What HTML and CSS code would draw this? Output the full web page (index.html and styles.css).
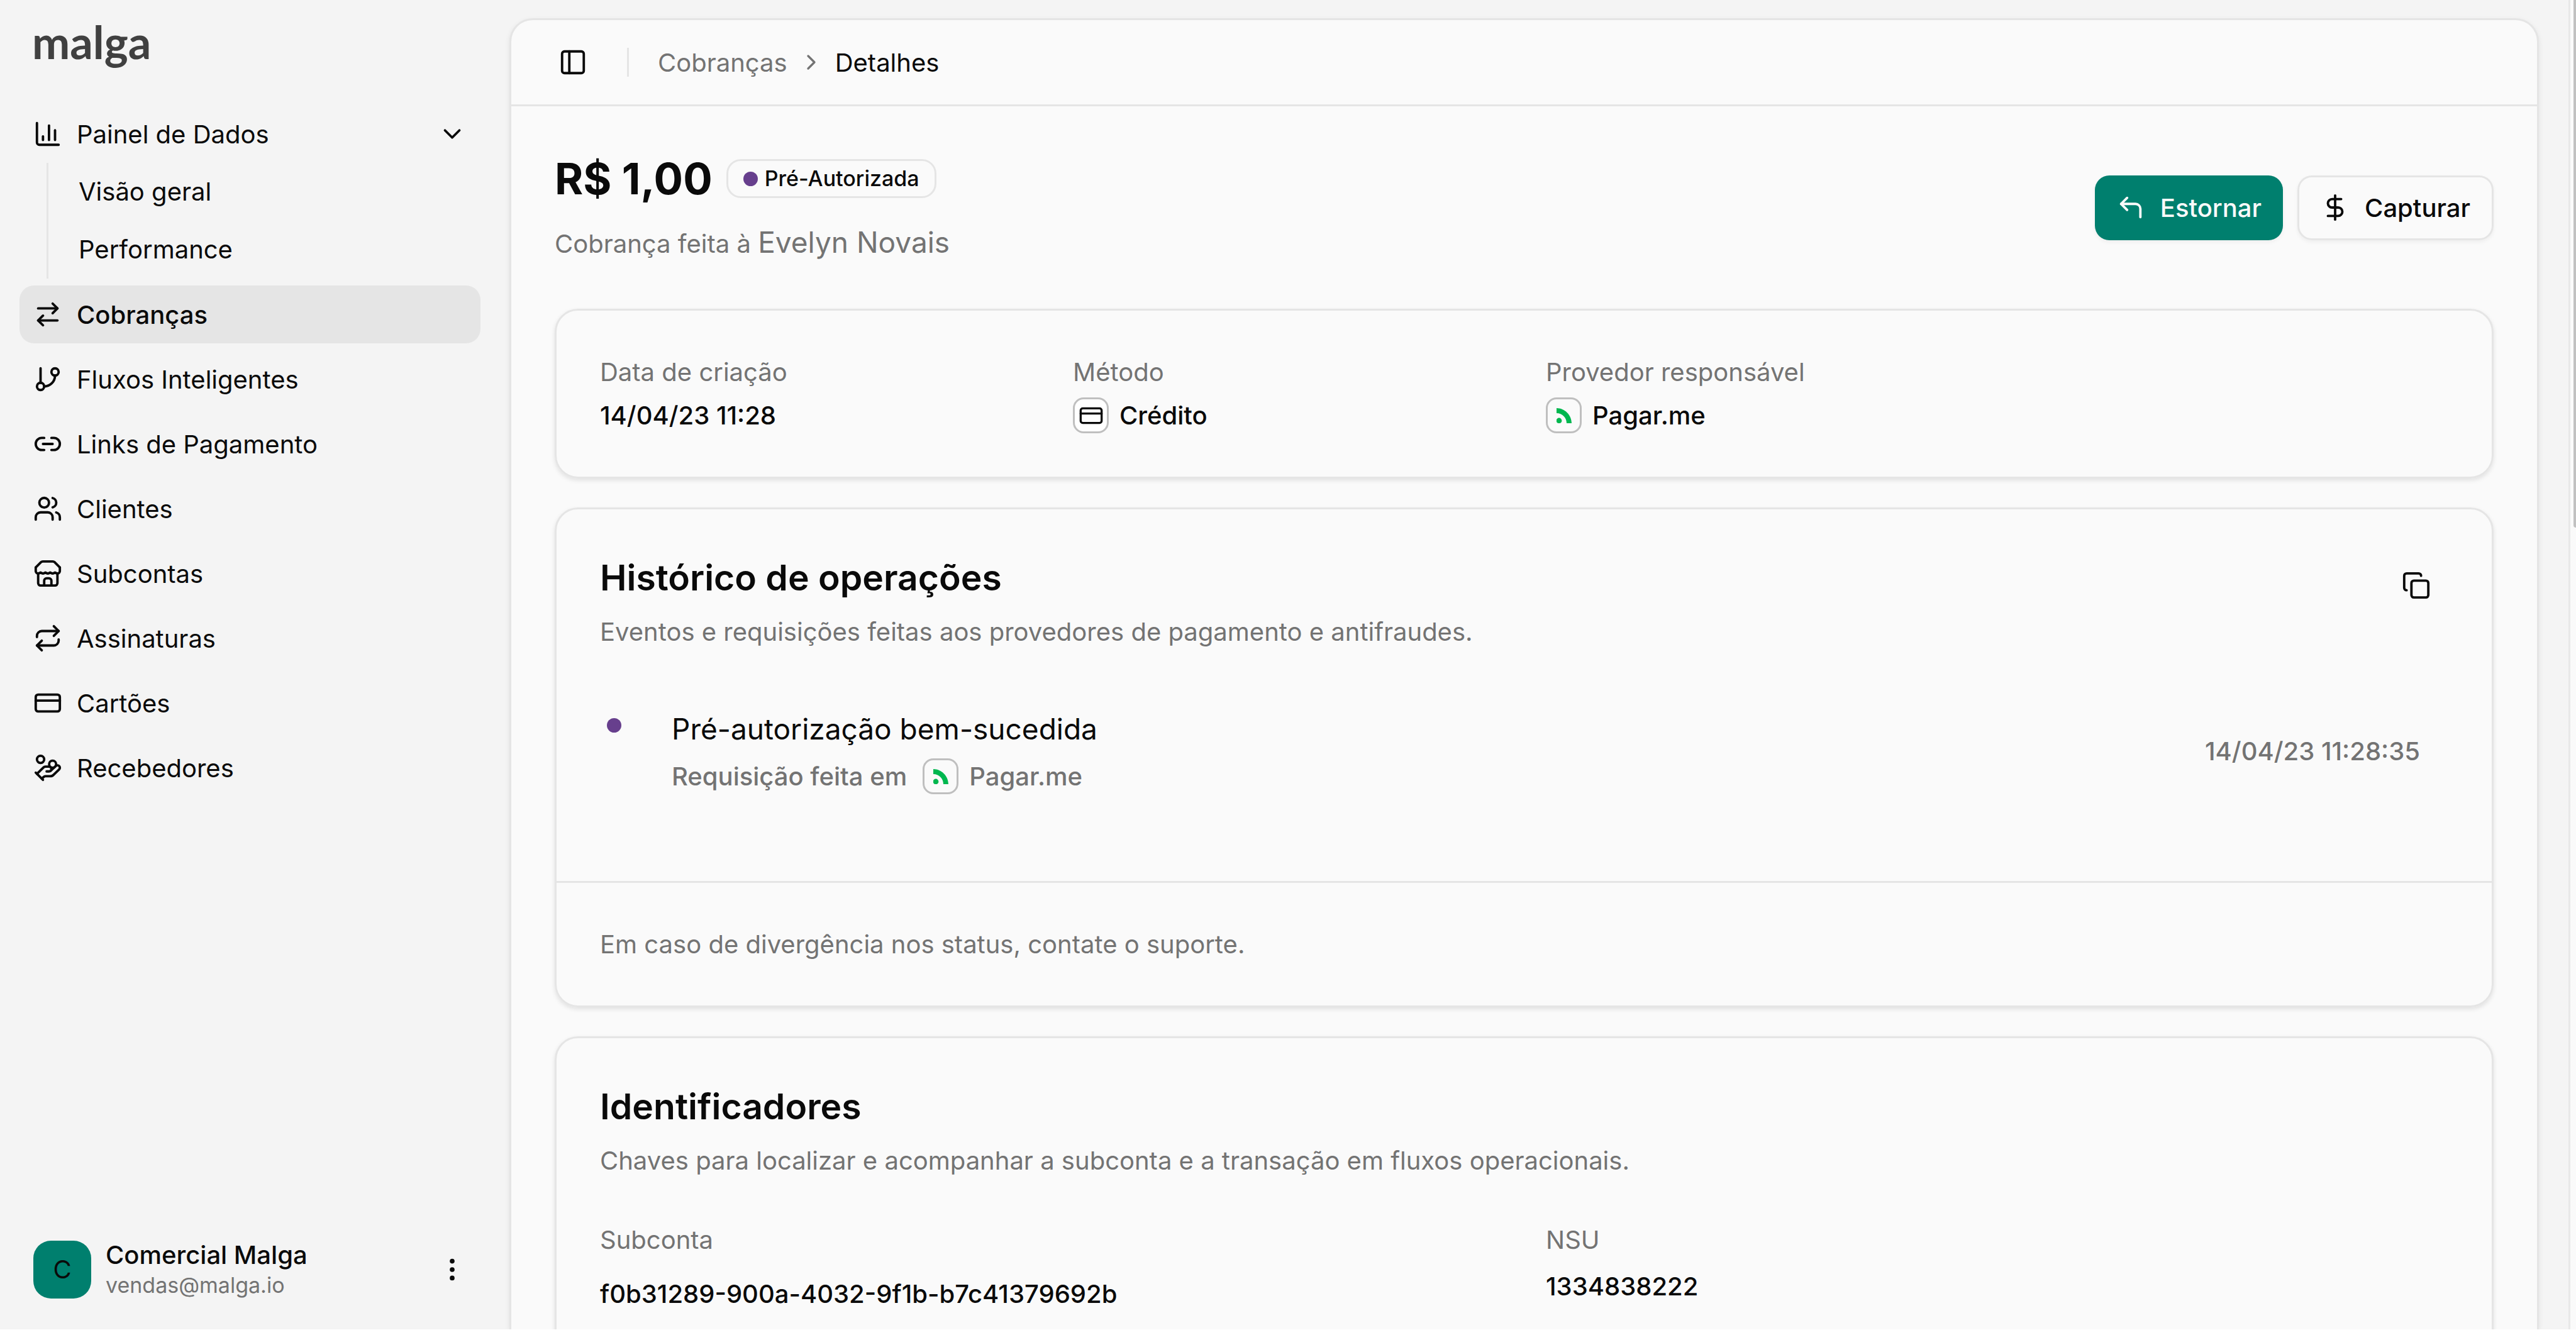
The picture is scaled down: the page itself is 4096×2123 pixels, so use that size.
FILE: index.html
```
<!DOCTYPE html>
<html lang="pt-BR">
<head>
    <meta charset="UTF-8">
    <title>Malga - Detalhes da cobrança</title>
    <link rel="stylesheet" href="styles.css">
</head>
<body>
    <div class="app">
        <aside class="sidebar">
            <a href="#" class="logo">malga</a>
            <nav class="nav">
                <button type="button" class="nav-item">
                    <svg class="icon" viewBox="0 0 24 24"><path d="M3 3v16a2 2 0 0 0 2 2h16"/><path d="M13 17V5"/><path d="M18 17V9"/><path d="M8 17v-3"/></svg>
                    <span>Painel de Dados</span>
                    <svg class="icon chevron" viewBox="0 0 24 24"><path d="m6 9 6 6 6-6"/></svg>
                </button>
                <div class="submenu">
                    <a href="#">Visão geral</a>
                    <a href="#">Performance</a>
                </div>
                <a href="#" class="nav-item active">
                    <svg class="icon" viewBox="0 0 24 24"><path d="m16 3 4 4-4 4"/><path d="M20 7H4"/><path d="m8 21-4-4 4-4"/><path d="M4 17h16"/></svg>
                    <span>Cobranças</span>
                </a>
                <a href="#" class="nav-item">
                    <svg class="icon" viewBox="0 0 24 24"><path d="M6 3v12"/><circle cx="18" cy="6" r="3"/><circle cx="6" cy="18" r="3"/><path d="M18 9a9 9 0 0 1-9 9"/></svg>
                    <span>Fluxos Inteligentes</span>
                </a>
                <a href="#" class="nav-item">
                    <svg class="icon" viewBox="0 0 24 24"><path d="M9 17H7A5 5 0 0 1 7 7h2"/><path d="M15 7h2a5 5 0 1 1 0 10h-2"/><path d="M8 12h8"/></svg>
                    <span>Links de Pagamento</span>
                </a>
                <a href="#" class="nav-item">
                    <svg class="icon" viewBox="0 0 24 24"><path d="M16 21v-2a4 4 0 0 0-4-4H6a4 4 0 0 0-4 4v2"/><circle cx="9" cy="7" r="4"/><path d="M22 21v-2a4 4 0 0 0-3-3.87"/><path d="M16 3.13a4 4 0 0 1 0 7.75"/></svg>
                    <span>Clientes</span>
                </a>
                <a href="#" class="nav-item">
                    <svg class="icon" viewBox="0 0 24 24"><path d="m2 7 4.41-4.41A2 2 0 0 1 7.83 2h8.34a2 2 0 0 1 1.42.59L22 7"/><path d="M4 12v8a2 2 0 0 0 2 2h12a2 2 0 0 0 2-2v-8"/><path d="M15 22v-4a2 2 0 0 0-2-2h-2a2 2 0 0 0-2 2v4"/><path d="M2 7v3a2 2 0 0 0 2 2 2.7 2.7 0 0 0 1.59-.63.7.7 0 0 1 .82 0A2.7 2.7 0 0 0 8 12a2.7 2.7 0 0 0 1.59-.63.7.7 0 0 1 .82 0A2.7 2.7 0 0 0 12 12a2.7 2.7 0 0 0 1.59-.63.7.7 0 0 1 .82 0A2.7 2.7 0 0 0 16 12a2.7 2.7 0 0 0 1.59-.63.7.7 0 0 1 .82 0A2.7 2.7 0 0 0 20 12a2 2 0 0 0 2-2V7"/></svg>
                    <span>Subcontas</span>
                </a>
                <a href="#" class="nav-item">
                    <svg class="icon" viewBox="0 0 24 24"><path d="m17 2 4 4-4 4"/><path d="M3 11v-1a4 4 0 0 1 4-4h14"/><path d="m7 22-4-4 4-4"/><path d="M21 13v1a4 4 0 0 1-4 4H3"/></svg>
                    <span>Assinaturas</span>
                </a>
                <a href="#" class="nav-item">
                    <svg class="icon" viewBox="0 0 24 24"><rect x="2" y="5" width="20" height="14" rx="2"/><path d="M2 10h20"/></svg>
                    <span>Cartões</span>
                </a>
                <a href="#" class="nav-item">
                    <svg class="icon" viewBox="0 0 24 24"><path d="M11 15h2a2 2 0 1 0 0-4h-3c-.6 0-1.1.2-1.4.6L3 17"/><path d="m7 21 1.6-1.4c.3-.4.8-.6 1.4-.6h4c1.1 0 2.1-.4 2.8-1.2l4.6-4.4a2 2 0 0 0-2.75-2.91l-4.2 3.9"/><path d="m2 16 6 6"/><circle cx="16" cy="9" r="2.9"/><circle cx="6" cy="5" r="3"/></svg>
                    <span>Recebedores</span>
                </a>
            </nav>
            <button type="button" class="user">
                <span class="avatar">C</span>
                <span class="user-info">
                    <span class="user-name">Comercial Malga</span>
                    <span class="user-email">vendas@malga.io</span>
                </span>
                <svg class="icon" viewBox="0 0 24 24"><circle cx="12" cy="12" r="1"/><circle cx="12" cy="5" r="1"/><circle cx="12" cy="19" r="1"/></svg>
            </button>
        </aside>

        <main class="panel">
            <header class="topbar">
                <button type="button" class="toggle" aria-label="Alternar menu">
                    <svg class="icon" viewBox="0 0 24 24"><rect x="3" y="3" width="18" height="18" rx="2"/><path d="M9 3v18"/></svg>
                </button>
                <nav class="breadcrumb">
                    <a href="#">Cobranças</a>
                    <svg class="icon icon-sm" viewBox="0 0 24 24"><path d="m9 18 6-6-6-6"/></svg>
                    <span class="current">Detalhes</span>
                </nav>
            </header>

            <div class="content">
                <section class="summary">
                    <div>
                        <div class="amount">
                            <h1>R$ 1,00</h1>
                            <span class="badge"><span class="dot"></span>Pré-Autorizada</span>
                        </div>
                        <p class="customer">Cobrança feita à <a href="#">Evelyn Novais</a></p>
                    </div>
                    <div class="actions">
                        <button type="button" class="btn btn-primary">
                            <svg class="icon" viewBox="0 0 24 24"><path d="M9 14 4 9l5-5"/><path d="M20 20v-7a4 4 0 0 0-4-4H4"/></svg>
                            Estornar
                        </button>
                        <button type="button" class="btn btn-outline">
                            <svg class="icon" viewBox="0 0 24 24"><path d="M12 2v20"/><path d="M17 5H9.5a3.5 3.5 0 0 0 0 7h5a3.5 3.5 0 0 1 0 7H6"/></svg>
                            Capturar
                        </button>
                    </div>
                </section>

                <section class="card">
                    <dl class="details">
                        <div>
                            <dt>Data de criação</dt>
                            <dd>14/04/23 11:28</dd>
                        </div>
                        <div>
                            <dt>Método</dt>
                            <dd>
                                <span class="brand brand-white"><svg class="icon icon-sm" viewBox="0 0 24 24"><rect x="2" y="5" width="20" height="14" rx="2"/><path d="M2 10h20"/></svg></span>
                                Crédito
                            </dd>
                        </div>
                        <div>
                            <dt>Provedor responsável</dt>
                            <dd>
                                <span class="brand"><svg class="pagarme" viewBox="0 0 24 24"><path d="M0 0c13 0 24 11 24 24h-8C16 15 9 8 0 8z"/><circle cx="4" cy="20" r="4.4"/></svg></span>
                                Pagar.me
                            </dd>
                        </div>
                    </dl>
                </section>

                <section class="card">
                    <div class="card-header">
                        <div>
                            <h2>Histórico de operações</h2>
                            <p>Eventos e requisições feitas aos provedores de pagamento e antifraudes.</p>
                        </div>
                        <button type="button" class="copy" aria-label="Copiar">
                            <svg class="icon" viewBox="0 0 24 24"><rect x="8" y="8" width="14" height="14" rx="2"/><path d="M4 16c-1.1 0-2-.9-2-2V4c0-1.1.9-2 2-2h10c1.1 0 2 .9 2 2"/></svg>
                        </button>
                    </div>
                    <div class="event">
                        <span class="dot"></span>
                        <div class="event-body">
                            <h3>Pré-autorização bem-sucedida</h3>
                            <p>
                                Requisição feita em
                                <span class="brand"><svg class="pagarme" viewBox="0 0 24 24"><path d="M0 0c13 0 24 11 24 24h-8C16 15 9 8 0 8z"/><circle cx="4" cy="20" r="4.4"/></svg></span>
                                Pagar.me
                            </p>
                        </div>
                        <time>14/04/23 11:28:35</time>
                    </div>
                    <footer class="card-footer">Em caso de divergência nos status, contate o suporte.</footer>
                </section>

                <section class="card">
                    <div class="card-header">
                        <div>
                            <h2>Identificadores</h2>
                            <p>Chaves para localizar e acompanhar a subconta e a transação em fluxos operacionais.</p>
                        </div>
                    </div>
                    <dl class="details ids">
                        <div>
                            <dt>Subconta</dt>
                            <dd><button type="button" class="copy-id">f0b31289-900a-4032-9f1b-b7c41379692b</button></dd>
                        </div>
                        <div>
                            <dt>NSU</dt>
                            <dd>1334838222</dd>
                        </div>
                    </dl>
                </section>
            </div>
        </main>

        <div class="scrollbar"><div class="thumb"></div></div>
    </div>
</body>
</html>
```
FILE: styles.css
```
* {
    box-sizing: border-box;
}

body {
    margin: 0;
    background: #ffffff;
    color: #0a0a0a;
    font-family: Inter, "Liberation Sans", sans-serif;
    font-size: 40px;
    line-height: 57px;
}

h1, h2, h3, p, dl, dd {
    margin: 0;
}

a {
    color: inherit;
    text-decoration: none;
}

button {
    border: 0;
    padding: 0;
    background: none;
    color: inherit;
    font: inherit;
    text-align: left;
    cursor: pointer;
}

.app {
    display: flex;
    height: calc(100vh - 9px);
    overflow: hidden;
    background: #f4f4f4;
}

.icon {
    flex: none;
    width: 46px;
    height: 46px;
    fill: none;
    stroke: currentColor;
    stroke-width: 2;
    stroke-linecap: round;
    stroke-linejoin: round;
}

.icon-sm {
    width: 40px;
    height: 40px;
}

/* Menu lateral */
.sidebar {
    display: flex;
    flex-direction: column;
    flex: none;
    width: 795px;
    padding: 20px 31px 27px;
}

.logo {
    padding: 0 20px;
    color: #404040;
    font-family: Lato, "Open Sans", sans-serif;
    font-size: 72px;
    font-weight: 700;
    line-height: 92px;
}

.nav {
    display: flex;
    flex-direction: column;
    flex: 1;
    gap: 11px;
    padding-top: 55px;
}

.nav-item {
    display: flex;
    align-items: center;
    gap: 23px;
    height: 92px;
    padding: 0 22px;
    border-radius: 23px;
}

.active {
    background: #e5e5e5;
    font-weight: 500;
}

.chevron {
    margin-left: auto;
}

.submenu {
    display: flex;
    flex-direction: column;
    margin: -11px 0 0 43px;
    padding-left: 48px;
    border-left: 3px solid #e5e5e5;
}

.submenu a {
    line-height: 92px;
}

.user {
    display: flex;
    align-items: center;
    gap: 23px;
    height: 137px;
    padding: 0 22px;
}

.avatar {
    width: 92px;
    border-radius: 28px;
    background: #007f6e;
    line-height: 92px;
    text-align: center;
}

.user-info {
    display: flex;
    flex: 1;
    flex-direction: column;
}

.user-name {
    font-weight: 500;
    line-height: 50px;
}

.user-email {
    color: #737373;
    font-size: 34px;
    line-height: 46px;
}

/* Painel principal */
.panel {
    flex: 1;
    margin: 29px 47px 0 15px;
    border: 3px solid #e5e5e5;
    border-bottom: 0;
    border-radius: 37px 37px 0 0;
    background: #fafafa;
    box-shadow: 0 3px 9px rgba(0, 0, 0, 0.08);
}

.topbar {
    display: flex;
    align-items: center;
    height: 137px;
    padding: 0 69px;
    border-bottom: 3px solid #e5e5e5;
}

.toggle {
    display: flex;
    justify-content: center;
    width: 57px;
}

.breadcrumb {
    display: flex;
    align-items: center;
    gap: 18px;
    height: 46px;
    margin-left: 58px;
    padding-left: 46px;
    border-left: 3px solid #e5e5e5;
    color: #737373;
}

.current {
    color: #0a0a0a;
}

.content {
    display: flex;
    flex-direction: column;
    gap: 46px;
    padding: 69px 69px 0;
}

.summary {
    display: flex;
    align-items: center;
    justify-content: space-between;
    margin-bottom: 23px;
}

.amount {
    display: flex;
    align-items: center;
    gap: 22px;
}

h1 {
    font-size: 69px;
    font-weight: 700;
    line-height: 92px;
}

.badge {
    display: flex;
    align-items: center;
    gap: 11px;
    padding: 5px 24px;
    border: 3px solid #e5e5e5;
    border-radius: 23px;
    font-size: 34px;
    font-weight: 500;
    line-height: 46px;
}

.dot {
    flex: none;
    width: 23px;
    height: 23px;
    border-radius: 50%;
    background: #673f8d;
}

.customer {
    margin-top: 21px;
    color: #737373;
    line-height: 69px;
}

.customer a {
    font-size: 46px;
}

.actions {
    display: flex;
    gap: 23px;
}

.btn {
    display: flex;
    align-items: center;
    gap: 24px;
    height: 103px;
    padding: 0 34px;
    border-radius: 23px;
    font-weight: 500;
    box-shadow: 0 3px 6px rgba(0, 0, 0, 0.05);
}

.btn-primary {
    background: #007f6e;
    color: #fafafa;
}

.btn-outline {
    border: 3px solid #e5e5e5;
}

/* Cartões */
.card {
    border: 3px solid #e5e5e5;
    border-radius: 37px;
    box-shadow: 0 3px 7px rgba(0, 0, 0, 0.1);
}

.details {
    display: grid;
    grid-template-columns: repeat(4, 1fr);
    gap: 69px;
    padding: 69px;
}

.details div {
    display: flex;
    flex-direction: column;
    gap: 12px;
}

.details dt {
    color: #737373;
}

.details dd {
    display: flex;
    align-items: center;
    gap: 17px;
    font-weight: 500;
}

.brand {
    display: flex;
    align-items: center;
    justify-content: center;
    width: 57px;
    height: 57px;
    border: 3px solid #bfbfbf;
    border-radius: 17px;
}

.brand-white {
    background: #ffffff;
}

.pagarme {
    width: 24px;
    height: 24px;
    fill: #00b74f;
}

.card-header {
    display: flex;
    justify-content: space-between;
    padding: 69px 69px 0;
}

h2 {
    font-size: 57px;
    font-weight: 600;
    line-height: 80px;
}

.card-header p {
    margin-top: 17px;
    color: #737373;
}

.copy {
    display: flex;
    align-items: center;
    justify-content: center;
    width: 103px;
    height: 103px;
}

.event {
    display: flex;
    align-items: center;
    padding: 92px 114px 138px 80px;
}

.event .dot {
    align-self: flex-start;
    margin-top: 17px;
}

.event-body {
    flex: 1;
    padding-left: 80px;
}

h3 {
    font-size: 46px;
    font-weight: 400;
    line-height: 69px;
}

.event p {
    display: flex;
    gap: 17px;
    margin-top: 12px;
}

.event p, .event time {
    color: #737373;
    font-weight: 500;
}

.event p .brand {
    margin-left: 8px;
}

.card-footer {
    padding: 69px;
    border-top: 3px solid #e5e5e5;
    color: #737373;
}

.ids {
    grid-template-columns: repeat(2, 1fr);
}

.ids div {
    gap: 17px;
}

.copy-id {
    height: 80px;
    font-weight: 500;
}

/* Barra de rolagem */
.scrollbar {
    flex: none;
    width: 12px;
    border-left: 3px solid #e8e8e8;
    background: #fafafa;
}

.thumb {
    height: 839px;
    margin-left: 5px;
    border-radius: 0 0 0 4px;
    background: #c1c1c1;
}
```
